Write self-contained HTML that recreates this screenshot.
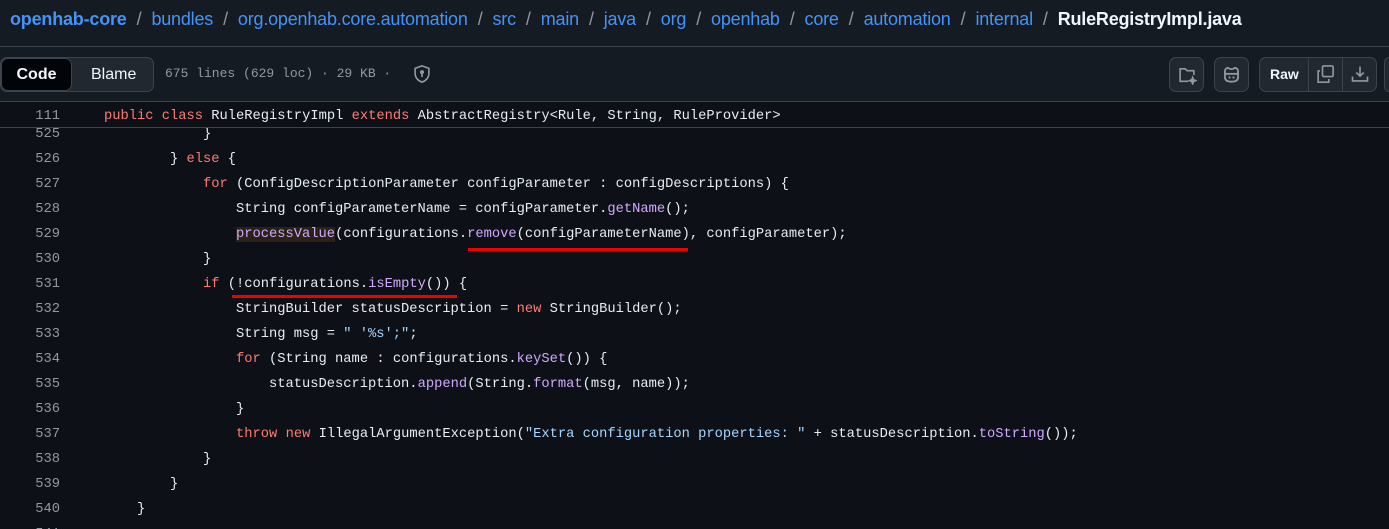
<!DOCTYPE html>
<html><head><meta charset="utf-8"><style>
*{margin:0;padding:0;box-sizing:border-box}
body{width:1389px;height:529px;overflow:hidden;background:#0d1117;font-family:"Liberation Sans",sans-serif;color:#e6edf3;position:relative}
.top{position:absolute;left:0;top:0;width:1389px;height:101px;background:#151b23;}
.bc{position:absolute;left:10px;top:9px;font-size:18px;color:#4493f8;white-space:nowrap;letter-spacing:-0.2px}
.bc b{font-weight:bold}
.bc .s{color:#9198a1;margin:0 10px}
.bc .f{color:#f0f6fc;font-weight:bold}
.hr1{position:absolute;left:0;top:46px;width:1389px;height:1px;background:#3d444d}
.seg{position:absolute;left:0;top:57px;width:154px;height:35px;border:1px solid #3d444d;border-radius:7px;background:#212830}
.seg .c{position:absolute;left:0;top:0;width:71px;height:33px;background:#010409;border:1px solid #3d444d;border-radius:7px;color:#f0f6fc;font-size:16px;line-height:31px;text-align:center;font-weight:bold}
.seg .bl{position:absolute;left:90px;top:0;line-height:33px;font-size:16px;color:#f0f6fc}
.meta{position:absolute;left:165px;top:66px;font-family:"Liberation Mono",monospace;font-size:13px;color:#9198a1}
.btn{position:absolute;top:57px;height:35px;border:1px solid #3d444d;border-radius:7px;background:#212830}
.hr2{position:absolute;left:0;top:101px;width:1389px;height:1px;background:#3d444d}
.sticky{position:absolute;left:0;top:102px;width:1389px;height:26px;background:#0d1117;border-bottom:1px solid #3d444d;z-index:2}
.code{position:absolute;left:0;top:128px;width:1389px;height:401px;overflow:hidden}
.ln,.sticky .n{position:absolute;width:60px;text-align:right;font-family:"Liberation Mono",monospace;font-size:13.75px;color:#9198a1;line-height:25px}
.tx{position:absolute;left:104px;font-family:"Liberation Mono",monospace;font-size:13.75px;line-height:25px;white-space:pre;color:#e6edf3}
.k{color:#ff7b72}.f{color:#d2a8ff}.s{color:#a5d6ff}
.ul{position:absolute;height:3px;background:#e00;z-index:3}
</style></head><body>
<div class="top"></div>
<div class="bc"><b>openhab-core</b><span class="s">/</span>bundles<span class="s">/</span>org.openhab.core.automation<span class="s">/</span>src<span class="s">/</span>main<span class="s">/</span>java<span class="s">/</span>org<span class="s">/</span>openhab<span class="s">/</span>core<span class="s">/</span>automation<span class="s">/</span>internal<span class="s">/</span><span class="f">RuleRegistryImpl.java</span></div>
<div class="hr1"></div>
<div class="seg"><div class="c">Code</div><div class="bl">Blame</div></div>
<div class="meta">675 lines (629 loc) · 29 KB ·</div>
<svg style="position:absolute;left:412px;top:64px" width="20" height="20" viewBox="0 0 16 16" fill="none" stroke="#9198a1" stroke-width="1.3"><path d="M8 1.5 L13.5 3.5 V7.5 C13.5 11 11 13.5 8 14.5 C5 13.5 2.5 11 2.5 7.5 V3.5 Z"/><circle cx="8" cy="6.5" r="1" fill="#9198a1"/><path d="M8 7.5V10.5"/></svg>
<div class="btn" style="left:1169px;width:35px"></div>
<svg style="position:absolute;left:1177px;top:65px" width="20" height="20" viewBox="0 0 16 16" fill="none" stroke="#9198a1" stroke-width="1.3"><path d="M9 13H2.5V3H6.5L8 4.5H13.5V8"/><path d="M12.5 10L13.2 11.8 15 12.5 13.2 13.2 12.5 15 11.8 13.2 10 12.5 11.8 11.8Z" fill="#9198a1"/></svg>
<div class="btn" style="left:1214px;width:35px"></div>
<svg style="position:absolute;left:1221px;top:64px" width="21" height="21" viewBox="0 0 16 16" fill="none" stroke="#9198a1" stroke-width="1.4"><path d="M3 6C3 3 5 2.5 6.5 3.5 7.3 4 8.7 4 9.5 3.5 11 2.5 13 3 13 6V10C13 12.5 11 13.5 8 13.5 5 13.5 3 12.5 3 10Z"/><path d="M3 7.5H13"/><path d="M6.5 9.5V11M9.5 9.5V11"/></svg>
<div class="btn" style="left:1259px;width:118px"></div>
<div style="position:absolute;left:1270px;top:66px;font-size:14px;font-weight:bold;color:#f0f6fc">Raw</div>
<div style="position:absolute;left:1308px;top:58px;width:1px;height:33px;background:#3d444d"></div>
<div style="position:absolute;left:1342px;top:58px;width:1px;height:33px;background:#3d444d"></div>
<svg style="position:absolute;left:1315px;top:64px" width="20" height="20" viewBox="0 0 16 16" fill="none" stroke="#9198a1" stroke-width="1.3"><rect x="6" y="1.5" width="8.5" height="8.5" rx="1"/><path d="M4 5.5H2.5V14.5H11V12"/></svg>
<svg style="position:absolute;left:1350px;top:64px" width="20" height="20" viewBox="0 0 16 16" fill="none" stroke="#9198a1" stroke-width="1.3"><path d="M2 10V13.5H14V10"/><path d="M8 2V9.5M5 6.8L8 9.7 11 6.8"/></svg>
<div style="position:absolute;left:1384px;top:57px;width:10px;height:35px;border:1px solid #3d444d;border-radius:7px;background:#212830"></div>
<div class="hr2"></div>
<div class="sticky"><div class="n" style="left:0;top:2px">111</div><div class="tx" style="top:2px"><span class="k">public</span> <span class="k">class</span> RuleRegistryImpl <span class="k">extends</span> AbstractRegistry&lt;Rule, String, RuleProvider&gt;</div></div>
<div class="code">
<div class="ln" style="top:-6px">525</div><div class="tx" style="top:-6px">            }</div>
<div class="ln" style="top:19px">526</div><div class="tx" style="top:19px">        } <span class="k">else</span> {</div>
<div class="ln" style="top:44px">527</div><div class="tx" style="top:44px">            <span class="k">for</span> (ConfigDescriptionParameter configParameter : configDescriptions) {</div>
<div class="ln" style="top:69px">528</div><div class="tx" style="top:69px">                String configParameterName = configParameter.<span class="f">getName</span>();</div>
<div class="ln" style="top:94px">529</div><div class="tx" style="top:94px">                <span class="f" style="background:#2a2216">processValue</span>(configurations.<span class="f">remove</span>(configParameterName), configParameter);</div>
<div class="ln" style="top:119px">530</div><div class="tx" style="top:119px">            }</div>
<div class="ln" style="top:144px">531</div><div class="tx" style="top:144px">            <span class="k">if</span> (!configurations.<span class="f">isEmpty</span>()) {</div>
<div class="ln" style="top:169px">532</div><div class="tx" style="top:169px">                StringBuilder statusDescription = <span class="k">new</span> StringBuilder();</div>
<div class="ln" style="top:194px">533</div><div class="tx" style="top:194px">                String msg = <span class="s">" '%s';"</span>;</div>
<div class="ln" style="top:219px">534</div><div class="tx" style="top:219px">                <span class="k">for</span> (String name : configurations.<span class="f">keySet</span>()) {</div>
<div class="ln" style="top:244px">535</div><div class="tx" style="top:244px">                    statusDescription.<span class="f">append</span>(String.<span class="f">format</span>(msg, name));</div>
<div class="ln" style="top:269px">536</div><div class="tx" style="top:269px">                }</div>
<div class="ln" style="top:294px">537</div><div class="tx" style="top:294px">                <span class="k">throw</span> <span class="k">new</span> IllegalArgumentException(<span class="s">"Extra configuration properties: "</span> + statusDescription.<span class="f">toString</span>());</div>
<div class="ln" style="top:319px">538</div><div class="tx" style="top:319px">            }</div>
<div class="ln" style="top:344px">539</div><div class="tx" style="top:344px">        }</div>
<div class="ln" style="top:369px">540</div><div class="tx" style="top:369px">    }</div>
<div class="ln" style="top:394px">541</div>
</div>
<div class="ul" style="left:468px;top:248px;width:220px"></div>
<div class="ul" style="left:232px;top:295px;width:225px"></div>
</body></html>
